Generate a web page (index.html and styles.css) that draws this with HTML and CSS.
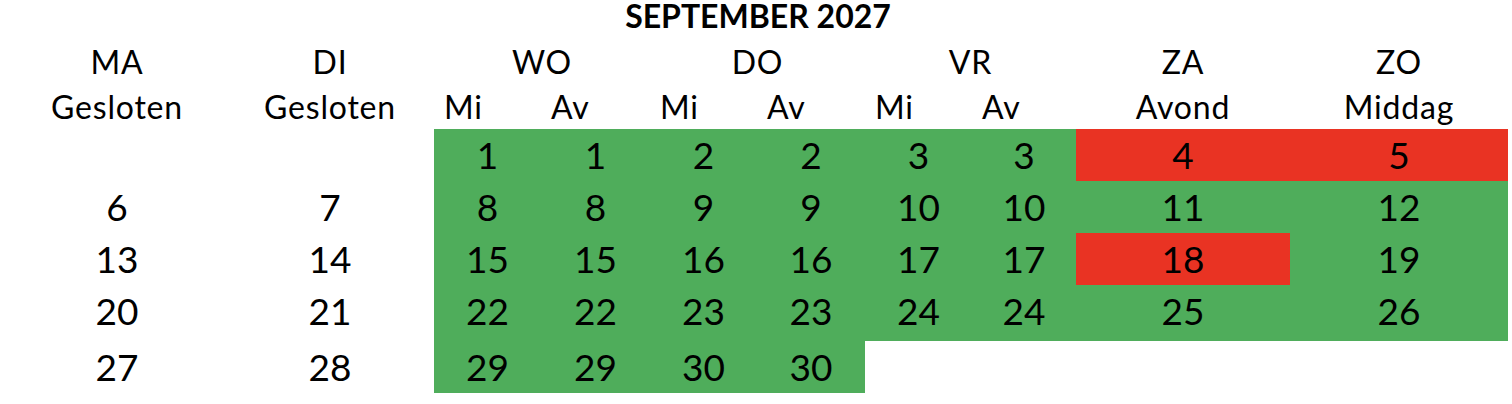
FILE: index.html
```html
<!DOCTYPE html>
<html lang="nl">
<head>
<meta charset="utf-8">
<title>September 2027</title>
<link rel="stylesheet" href="styles.css">
</head>
<body>
<div class="cal">
  <div class="title">SEPTEMBER 2027</div>

  <div class="h1">MA</div>
  <div class="h1">DI</div>
  <div class="h1 span2">WO</div>
  <div class="h1 span2">DO</div>
  <div class="h1 span2">VR</div>
  <div class="h1">ZA</div>
  <div class="h1">ZO</div>

  <div class="h2">Gesloten</div>
  <div class="h2">Gesloten</div>
  <div class="h2 sub">Mi</div>
  <div class="h2 sub">Av</div>
  <div class="h2 sub">Mi</div>
  <div class="h2 sub">Av</div>
  <div class="h2 sub">Mi</div>
  <div class="h2 sub">Av</div>
  <div class="h2">Avond</div>
  <div class="h2">Middag</div>

  <div class="d"></div>
  <div class="d"></div>
  <div class="d g">1</div>
  <div class="d g">1</div>
  <div class="d g">2</div>
  <div class="d g">2</div>
  <div class="d g">3</div>
  <div class="d g">3</div>
  <div class="d r">4</div>
  <div class="d r">5</div>

  <div class="d">6</div>
  <div class="d">7</div>
  <div class="d g">8</div>
  <div class="d g">8</div>
  <div class="d g">9</div>
  <div class="d g">9</div>
  <div class="d g">10</div>
  <div class="d g">10</div>
  <div class="d g">11</div>
  <div class="d g">12</div>

  <div class="d">13</div>
  <div class="d">14</div>
  <div class="d g">15</div>
  <div class="d g">15</div>
  <div class="d g">16</div>
  <div class="d g">16</div>
  <div class="d g">17</div>
  <div class="d g">17</div>
  <div class="d r">18</div>
  <div class="d g">19</div>

  <div class="d">20</div>
  <div class="d">21</div>
  <div class="d g">22</div>
  <div class="d g">22</div>
  <div class="d g">23</div>
  <div class="d g">23</div>
  <div class="d g">24</div>
  <div class="d g">24</div>
  <div class="d g">25</div>
  <div class="d g">26</div>

  <div class="d">27</div>
  <div class="d">28</div>
  <div class="d g">29</div>
  <div class="d g">29</div>
  <div class="d g">30</div>
  <div class="d g">30</div>
  <div class="d"></div>
  <div class="d"></div>
  <div class="d"></div>
  <div class="d"></div>
</div>
</body>
</html>
```
FILE: styles.css
```css
html, body {
  background: #ffffff;
}
body {
  margin: 0 0 0 8px;
  font-family: Lato, "Open Sans", sans-serif;
  color: #000000;
}
.cal {
  display: grid;
  grid-template-columns: 218px 208px 107px 109px 107px 108px 107px 104px 214px 218px;
  grid-template-rows: 39px 45px 45px 52px 52px 52px 56px 52px;
}
.title {
  grid-column: 1 / -1;
  text-align: center;
  font-weight: 700;
  font-size: 32px;
  line-height: 32px;
}
.h1, .h2, .d {
  text-align: center;
  white-space: nowrap;
}
.h1, .h2 {
  font-size: 32px;
  line-height: 32px;
  letter-spacing: 0.8px;
  padding-top: 7px;
}
.span2 {
  grid-column: span 2;
}
.sub {
  text-align: left;
  padding-left: 10px;
}
.d {
  font-size: 37px;
  line-height: 37px;
  padding-top: 7px;
}
.g {
  background: #4fad5b;
}
.r {
  background: #e93323;
}
```
